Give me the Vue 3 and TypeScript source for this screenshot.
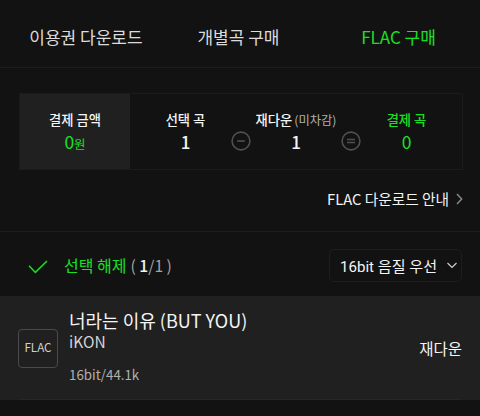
<template>
  <main class="page">
    <nav class="tabs">
      <button v-for="tab in tabs" :key="tab.id" class="tab" :class="[tab.id, { active: selectedTab === tab.id }]" @click="selectedTab = tab.id">{{ tab.label }}</button>
    </nav>

    <section class="payment">
      <div class="summary">
        <div class="cell total">
          <span class="label">결제 금액</span>
          <span class="value green">0<small>원</small></span>
        </div>
        <div class="cell">
          <span class="label">선택 곡</span>
          <span class="value">{{ selectedCount }}</span>
        </div>
        <div class="cell">
          <svg class="operator" viewBox="0 0 20 20">
            <circle cx="10" cy="10" r="8.9" />
            <path d="M6.2 10h7.6" />
          </svg>
          <span class="label">재다운<em>(미차감)</em></span>
          <span class="value">1</span>
        </div>
        <div class="cell">
          <svg class="operator" viewBox="0 0 20 20">
            <circle cx="10" cy="10" r="8.9" />
            <path d="M6 8.5h8M6 11.5h8" />
          </svg>
          <span class="label green">결제 곡</span>
          <span class="value green">0</span>
        </div>
      </div>
      <a class="guide">
        <span>FLAC 다운로드 안내</span>
        <svg width="7" height="12" viewBox="0 0 7 12"><path d="M1 1l4.7 5L1 11" /></svg>
      </a>
    </section>

    <div class="toolbar">
      <svg class="check" width="20" height="14" viewBox="0 0 20 14"><path d="M1 5.8l6.4 6.6L19 1" /></svg>
      <span class="release">선택 해제</span>
      <span class="count">( <b>{{ selectedCount }}</b>/{{ songs.length }} )</span>
      <button class="quality">
        <span>16bit 음질 우선</span>
        <svg width="10" height="7" viewBox="0 0 10 7"><path d="M.5 1L5 5.4 9.5 1" /></svg>
      </button>
    </div>

    <ul class="songs">
      <li v-for="song in songs" :key="song.title" class="song">
        <span class="badge">FLAC</span>
        <div class="info">
          <span class="title">{{ song.title }}</span>
          <span class="artist">{{ song.artist }}</span>
          <span class="format">{{ song.format }}</span>
        </div>
        <span class="state">재다운</span>
      </li>
    </ul>
  </main>
</template>

<script setup lang="ts">
import { computed, ref } from 'vue';

interface Song {
  title: string;
  artist: string;
  format: string;
  selected: boolean;
}

const tabs = [
  { id: 'voucher', label: '이용권 다운로드' },
  { id: 'single', label: '개별곡 구매' },
  { id: 'flac', label: 'FLAC 구매' },
];

const selectedTab = ref('flac');

const songs = ref<Song[]>([
  { title: '너라는 이유 (BUT YOU)', artist: 'iKON', format: '16bit/44.1k', selected: true },
]);

const selectedCount = computed(() => songs.value.filter((song) => song.selected).length);
</script>

<style>
body {
  background: #121212;
}
</style>

<style scoped>
.page {
  height: 416px;
  overflow: hidden;
  background: #121212;
  color: #f4f4f4;
  font-family: "Noto Sans CJK KR", sans-serif;
}

button {
  padding: 0;
  border: 0;
  background: none;
  color: inherit;
  font-family: inherit;
}

svg {
  flex: none;
  fill: none;
}

.green {
  color: #1ae024;
}

.tabs {
  display: grid;
  grid-template-columns: 172px 133px 1fr;
  box-sizing: border-box;
  height: 68px;
  padding-top: 5px;
  border-bottom: 1px solid #1c1c1c;
}

.tab {
  color: #dcdcdc;
  font-size: 17px;
  white-space: nowrap;
}

.tab.flac {
  padding-left: 12px;
}

.tab.active {
  color: #1ae024;
}

.payment {
  box-sizing: border-box;
  height: 164px;
  padding: 25px 17px 0 19px;
  border-bottom: 1px solid #1e1e1e;
}

.summary {
  display: grid;
  grid-template-columns: 110px 111px 110px 1fr;
  box-sizing: border-box;
  height: 77px;
  border: 1px solid #1b1b1b;
}

.cell {
  position: relative;
  display: flex;
  flex-direction: column;
  align-items: center;
  padding-top: 16px;
}

.cell.total {
  background: #202020;
}

.label {
  font-size: 13.3px;
  font-weight: 500;
  line-height: 20px;
  white-space: nowrap;
}

.label em {
  margin-left: 2px;
  color: #b0b0b0;
  font-size: 12.3px;
  font-style: normal;
  font-weight: 400;
}

.value {
  font-size: 17px;
  font-weight: 500;
  line-height: 23px;
}

.value.green {
  font-size: 17.5px;
  font-weight: 400;
}

.value small {
  font-size: 12.5px;
}

/* sits on the seam between two cells */
.operator {
  position: absolute;
  top: 37px;
  left: -10px;
  width: 20px;
  height: 20px;
  stroke: #505050;
  stroke-width: 1.6;
}

.guide {
  display: flex;
  justify-content: flex-end;
  align-items: center;
  gap: 7px;
  margin-top: 18px;
  font-size: 14.7px;
  line-height: 22px;
}

.guide svg {
  stroke: #8c8c8c;
  stroke-width: 1.4;
}

.toolbar {
  display: flex;
  align-items: center;
  height: 64px;
  padding: 0 18px 0 28px;
}

.check {
  margin-top: 5px;
  stroke: #1ae024;
  stroke-width: 1.5;
}

.release {
  margin: 2px 0 0 16px;
  color: #1ae024;
  font-size: 16px;
}

.count {
  margin: 2px 0 0 4px;
  color: #a4a4a4;
  font-size: 15.7px;
}

.count b {
  color: #f0f0f0;
  font-weight: 500;
}

.quality {
  display: flex;
  align-items: center;
  justify-content: space-between;
  box-sizing: border-box;
  width: 133px;
  height: 33px;
  margin: 3px 0 0 auto;
  padding: 0 4px 0 10px;
  border: 1px solid #1e1e1e;
  border-radius: 5px;
  font-family: Roboto, "Noto Sans CJK KR", sans-serif;
  font-size: 15.1px;
  white-space: nowrap;
}

.quality span {
  margin-top: -2px;
}

.quality svg {
  stroke: #d0d0d0;
  stroke-width: 1.2;
}

.songs {
  margin: 0;
  padding: 0;
  list-style: none;
}

.song {
  display: flex;
  align-items: center;
  box-sizing: border-box;
  height: 104px;
  padding: 0 18px;
  background: linear-gradient(#272727, #272727) 18px 103px / 444px 1px no-repeat #202020;
}

.badge {
  box-sizing: border-box;
  width: 40px;
  height: 39px;
  border: 1.5px solid #4a4a4a;
  border-radius: 4px;
  color: #d0d0d0;
  font-size: 11.6px;
  line-height: 35px;
  text-align: center;
}

.info {
  display: flex;
  flex: 1;
  flex-direction: column;
  margin: -2px 0 0 11px;
}

.title {
  font-size: 18px;
  line-height: 22px;
}

.artist {
  color: #d4d4d4;
  font-size: 15.5px;
  line-height: 20px;
}

.format {
  margin-top: 14px;
  color: #b0b0b0;
  font-size: 13.3px;
  line-height: 20px;
}

.state {
  margin-top: -1px;
  font-size: 15.5px;
}
</style>
